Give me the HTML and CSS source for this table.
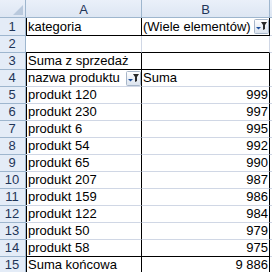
FILE: index.html
```html
<!DOCTYPE html>
<html lang="pl">
<head>
<meta charset="utf-8">
<link rel="stylesheet" href="styles.css">
</head>
<body>
<div class="sheet">
  <div class="h corner"><svg width="25" height="17" viewBox="0 0 25 17"><polygon points="23,5 23,15 13,15" fill="#b9c9dd"/></svg></div>
  <div class="h">A</div>
  <div class="h">B</div>
  <div class="h hc"></div>

  <div class="rh">1</div>
  <div class="c pl br bb">kategoria</div>
  <div class="c cb br bb fcell">(Wiele elementów)<span class="fbtn"><svg width="15" height="15" viewBox="0 0 15 15"><defs><linearGradient id="g1" x1="0" y1="0" x2="0" y2="1"><stop offset="0" stop-color="#ffffff"/><stop offset="1" stop-color="#dbe3ee"/></linearGradient></defs><rect x="0.5" y="0.5" width="14" height="14" rx="1" fill="url(#g1)" stroke="#a7b6c9"/><polygon points="2,8 7,8 4.5,10.5" fill="#1d4f9c"/><polygon points="7,3 13,3 11,6 11,10 9,11 9,6" fill="#2a2a2a"/></svg></span></div>
  <div class="c cc"></div>

  <div class="rh">2</div>
  <div class="c bb"></div>
  <div class="c cb bb"></div>
  <div class="c cc"></div>

  <div class="rh">3</div>
  <div class="c pl br bb">Suma z sprzedaż</div>
  <div class="c cb br bb"></div>
  <div class="c cc"></div>

  <div class="rh">4</div>
  <div class="c pl br fcell">nazwa produktu<span class="fbtn"><svg width="15" height="15" viewBox="0 0 15 15"><defs><linearGradient id="g2" x1="0" y1="0" x2="0" y2="1"><stop offset="0" stop-color="#ffffff"/><stop offset="1" stop-color="#dbe3ee"/></linearGradient></defs><rect x="0.5" y="0.5" width="14" height="14" rx="1" fill="url(#g2)" stroke="#a7b6c9"/><polygon points="2,8 7,8 4.5,10.5" fill="#1d4f9c"/><polygon points="7,3 13,3 11,6 11,10 9,11 9,6" fill="#2a2a2a"/></svg></span></div>
  <div class="c cb br">Suma</div>
  <div class="c cc"></div>

  <div class="rh">5</div><div class="c pl br">produkt 120</div><div class="c br num">999</div><div class="c cc"></div>
  <div class="rh">6</div><div class="c pl br">produkt 230</div><div class="c br num">997</div><div class="c cc"></div>
  <div class="rh">7</div><div class="c pl br">produkt 6</div><div class="c br num">995</div><div class="c cc"></div>
  <div class="rh">8</div><div class="c pl br">produkt 54</div><div class="c br num">992</div><div class="c cc"></div>
  <div class="rh">9</div><div class="c pl br">produkt 65</div><div class="c br num">990</div><div class="c cc"></div>
  <div class="rh">10</div><div class="c pl br">produkt 207</div><div class="c br num">987</div><div class="c cc"></div>
  <div class="rh">11</div><div class="c pl br">produkt 159</div><div class="c br num">986</div><div class="c cc"></div>
  <div class="rh">12</div><div class="c pl br">produkt 122</div><div class="c br num">984</div><div class="c cc"></div>
  <div class="rh">13</div><div class="c pl br">produkt 50</div><div class="c br num">979</div><div class="c cc"></div>
  <div class="rh">14</div><div class="c pl br bb">produkt 58</div><div class="c br bb num">975</div><div class="c cc"></div>
  <div class="rh">15</div><div class="c pl br bb">Suma końcowa</div><div class="c br bb num">9 886</div><div class="c cc"></div>
</div>
</body>
</html>
```

FILE: styles.css
```css
* { box-sizing: border-box; }
html, body { margin: 0; padding: 0; background: #fff; }
body {
  font-family: "Liberation Sans", Arial, sans-serif;
  font-size: 13px;
  color: #000;
  overflow: hidden;
}
.sheet {
  display: grid;
  grid-template-columns: 26px 116px 128px 40px;
  grid-template-rows: 18px 18px repeat(14, 17px);
  width: 310px;
}
.h {
  background: linear-gradient(#eaf0f9, #dde6f3);
  border-right: 1px solid #9eb6ce;
  border-bottom: 1px solid #9eb6ce;
  color: #1f3558;
  display: flex;
  align-items: center;
  justify-content: center;
  line-height: 15px;
  padding-top: 1px;
}
.corner { padding: 0; align-items: stretch; justify-content: stretch; }
.corner svg { display: block; }
.hc { border-right: none; }
.rh {
  background: #e4ecf7;
  border-right: 1px solid #9eb6ce;
  border-bottom: 1px solid #9eb6ce;
  color: #1f3558;
  display: flex;
  align-items: flex-end;
  justify-content: center;
  line-height: 15px;
  padding-bottom: 1px;
  padding-right: 1px;
}
.c {
  border-right: 1px solid #d0d7e5;
  border-bottom: 1px solid #d0d7e5;
  display: flex;
  align-items: flex-end;
  line-height: 15px;
  padding: 0 2px 1px 2px;
  white-space: nowrap;
  overflow: hidden;
}
.cb { padding-left: 1px; }
.cc { border-right: none; }
.pl { box-shadow: inset 1px 0 0 #000; }
.br { border-right-color: #000; }
.bb { border-bottom-color: #000; }
.num { justify-content: flex-end; padding-right: 1px; }
.fcell { position: relative; }
.fbtn {
  position: absolute;
  right: 0;
  top: 1px;
  width: 15px;
  height: 15px;
}
.fbtn svg { display: block; }
```
